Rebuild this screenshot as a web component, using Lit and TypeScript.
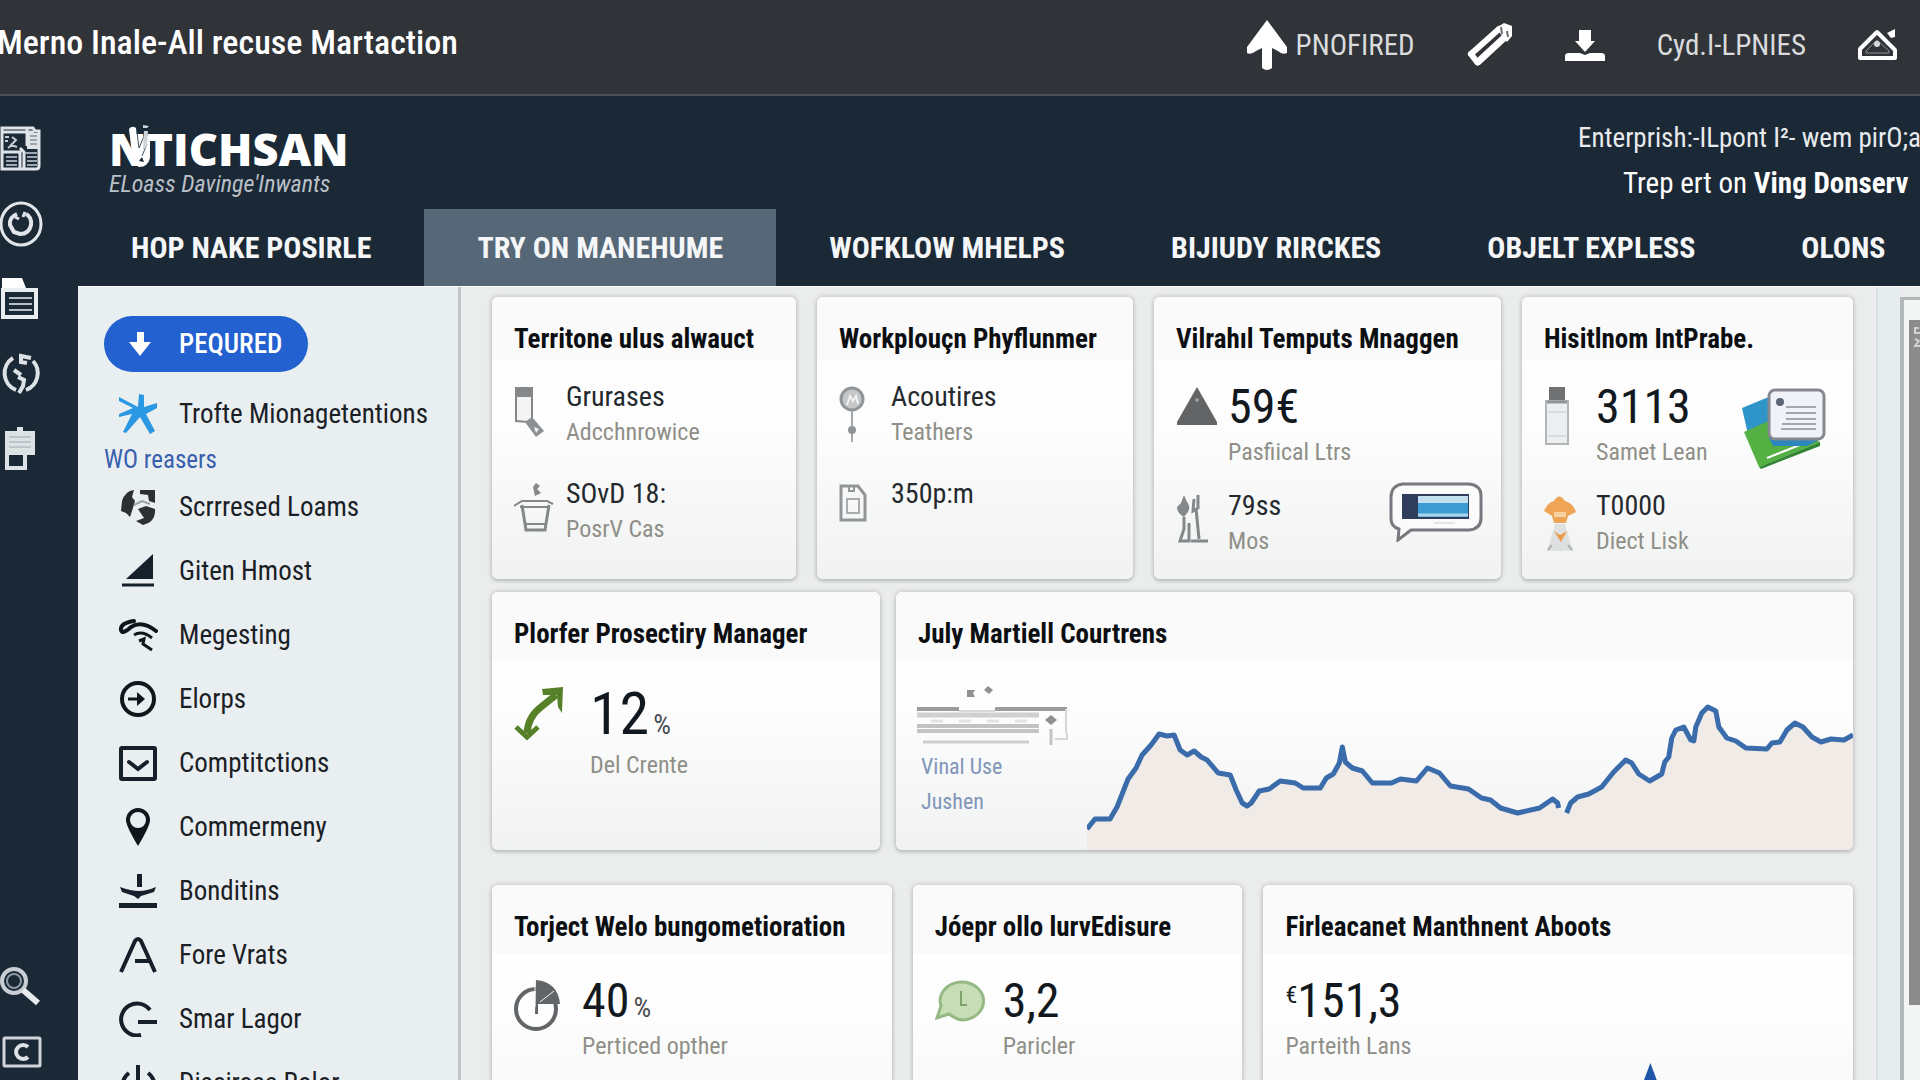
import { LitElement, html, svg, css, nothing, TemplateResult, SVGTemplateResult } from "lit";
import { customElement, property } from "lit/decorators.js";

const icon = (w: number, h: number, body: SVGTemplateResult) =>
  html`<svg class="icon" width=${w} height=${h} viewBox="0 0 ${w} ${h}" fill="none" aria-hidden="true">${body}</svg>`;

/* ---------- top bar icons ---------- */
const upArrow = icon(42, 50, svg`<path d="M21 0 L41 27 V33 Q36 35 32 31 L26 28 V48 Q21 52 16 48 V28 L10 31 Q5 35 1 33 V27 Z" fill="#fff"/>`);
const pencil = icon(46, 44, svg`
  <path d="M11 39 L38 14" stroke="#fff" stroke-width="7" stroke-linecap="round"/>
  <path d="M4 31 L32 6" stroke="#fff" stroke-width="6" stroke-linecap="round"/>
  <path d="M4 31 L10 39" stroke="#fff" stroke-width="6" stroke-linecap="round"/>
  <path d="M29 5 L37 0 L45 3 V13 L40 19 Z" fill="#fff"/>
  <path d="M34 4 L35 11 M40 8 L41 14" stroke="#6a6d71" stroke-width="2"/>`);
const download = icon(40, 31, svg`<path d="M14 0 H26 V11 H30 L20 22 L10 11 H14 Z" fill="#fff"/><path d="M0 31 V26 Q0 23 4 23 H15 L20 25 L25 23 H36 Q40 23 40 26 V31 Z" fill="#fff"/>`);
const tent = icon(40, 32, svg`
  <path d="M19 3 L37 21 V29 H2 V20 Z" stroke="#fff" stroke-width="4" stroke-linejoin="round"/>
  <path d="M8 22 L19 11 L31 22 V24 H8 Z" stroke="#8d9194" stroke-width="1"/>
  <circle cx="19" cy="15" r="3" fill="#d5d8da"/><path d="M29 4 L37 0 V8 L33 9 Z" fill="#fff"/>`);

/* ---------- brand mark ---------- */
const brandMark = html`<svg class="mark" width="26" height="44" viewBox="0 0 26 44" fill="none" aria-hidden="true">
  <path d="M2 5 Q5 1 9 4 L11 24 L15 12 L23 12 L23 34 Q21 43 12 43 Q5 41 5 30 Z" fill="#fff"/>
  <path d="M10 8 L12 24 L17 12 M20 20 L15 32" stroke="#43505d" stroke-width="1"/>
  <path d="M16 1 L22 2 L20 4 L16 4 Z M17 7 L21 7 L20 22 L16 26 Z" fill="#cdd4da"/>
  <path d="M12 37 L15 33 L17 38 Z" fill="#1b2836"/></svg>`;

/* ---------- rail icons ---------- */
const news = icon(41, 45, svg`
  <path d="M2 2 H33 L35 5 H39 V40 Q39 43 36 43 H2 Z" fill="#1c2937" stroke="#dfe4e8" stroke-width="3"/>
  <path d="M3 6 H34 M27 2 V20" stroke="#dfe4e8" stroke-width="3"/>
  <rect x="27" y="7" width="11" height="16" fill="#dfe4e8"/>
  <path d="M30 10 H37 M30 14 H37 M30 18 H37" stroke="#5b6773" stroke-width="1"/>
  <path d="M5 11 H9 M5 15 H8 M12 11 L16 14 L11 19 L17 21 M12 19 L8 22" stroke="#c7cfd6" stroke-width="2"/>
  <path d="M3 26 H20 V42 M24 42 V26 L20 22" stroke="#dfe4e8" stroke-width="3"/>
  <path d="M6 31 H17 M6 35 H17 M6 39 H17 M25 27 H37 M27 31 H37 M27 35 H37 M27 39 H37" stroke="#9da8b2" stroke-width="2"/>`);
const dial = icon(44, 46, svg`
  <ellipse cx="21" cy="23" rx="20" ry="21" stroke="#e2e6ea" stroke-width="3"/>
  <path d="M17 13 Q9 16 10 24 L14 31 L20 33 Q29 33 31 24 Q32 16 26 13" stroke="#e2e6ea" stroke-width="4"/>
  <path d="M15 16 L19 18 M25 11 L23 16" stroke="#e2e6ea" stroke-width="3"/>`);
const sheet = icon(40, 42, svg`
  <path d="M2 0 H22 L26 10 L37 13 H2 Z" fill="#fff"/>
  <path d="M3 12 H36 V39 H3 Z" stroke="#e9edf0" stroke-width="4"/>
  <path d="M9 20 H32 M9 26 H32 M9 32 H32" stroke="#b5bdc5" stroke-width="2"/>`);
const coin = icon(42, 42, svg`
  <path d="M13 5 A18 18 0 0 0 16 37 M33 8 A18 18 0 0 1 26 37" stroke="#dde2e6" stroke-width="4"/>
  <path d="M31 5 L21 3 L21 9 L27 10 M14 17 L21 22 M18 24 L24 27 L23 33 L19 40" stroke="#dde2e6" stroke-width="4"/>`);
const board = icon(38, 44, svg`
  <path d="M5 4 H35 V28 H27 V43 H5 Z" fill="#dde2e5"/><path d="M17 0 H23 V5 H17 Z" fill="#dde2e5"/>
  <path d="M9 10 H31 M9 15 H31 M9 20 H31" stroke="#9da6ae" stroke-width="1"/>
  <rect x="9" y="28" width="14" height="11" fill="#1b2836"/>`);
const lens = icon(42, 40, svg`
  <circle cx="14" cy="14" r="12" stroke="#c8ced4" stroke-width="4"/><circle cx="14" cy="14" r="7" stroke="#8f99a3" stroke-width="2"/>
  <path d="M23 23 L38 36" stroke="#e8ebee" stroke-width="6"/>`);
const frameC = icon(42, 32, svg`
  <rect x="4" y="2" width="36" height="28" rx="1" stroke="#cfd5da" stroke-width="3"/>
  <path d="M28 11 A7 7 0 1 0 28 21" stroke="#dde2e6" stroke-width="4"/>`);

/* ---------- side menu icons ---------- */
const star = icon(40, 40, svg`<path d="M1 3 L20 13 L21 0 L26 1 L26 13 L39 9 V14 L28 20 L37 37 L32 40 L22 23 L8 39 L5 38 L14 20 L1 23 V20 L15 14 L1 7 Z" fill="#2a98e2"/>`);
const globe = icon(36, 36, svg`
  <path d="M2 12 Q5 2 14 1 L12 8 L15 12 L12 22 L10 28 L6 24 L1 22 Z" fill="#2c3033"/>
  <path d="M20 1 H35 V14 L29 12 L28 6 L20 5 Z M18 20 L26 17 L35 20 Q36 33 23 36 L16 32 L24 29 Z" fill="#2c3033"/>
  <path d="M14 16 L22 12 L30 15" stroke="#9aa0a4" stroke-width="2"/>`);
const sail = icon(34, 34, svg`<path d="M32 0 V25 H5 Z" fill="#16202a"/><path d="M1 31 H33" stroke="#16202a" stroke-width="3"/>`);
const waves = icon(40, 34, svg`
  <path d="M16 3 Q2 5 3 12 Q4 17 13 9 Q24 2 38 13" stroke="#10161b" stroke-width="4" stroke-linecap="round"/>
  <path d="M16 17 Q24 12 34 20 M21 23 L26 21 L25 26 L34 32" stroke="#10161b" stroke-width="3"/>`);
const circleArrow = icon(38, 36, svg`<circle cx="19" cy="18" r="16" stroke="#10161b" stroke-width="4"/><path d="M9 18 H22" stroke="#10161b" stroke-width="3"/><path d="M18 11 L26 18 L18 25 Z" fill="#10161b"/>`);
const boxCheck = icon(38, 36, svg`<rect x="2" y="3" width="34" height="31" rx="1" stroke="#16202a" stroke-width="4"/><path d="M10 17 L19 24 L28 17" stroke="#16202a" stroke-width="4" stroke-linecap="round"/>`);
const pin = icon(26, 38, svg`<path fill-rule="evenodd" d="M13 0 A12 12 0 0 1 25 12 Q25 18 13 38 Q1 18 1 12 A12 12 0 0 1 13 0 Z M13 4 A8 8 0 1 0 13 20 A8 8 0 1 0 13 4 Z" fill="#10161b"/>`);
const drop = icon(38, 36, svg`<path d="M18 1 H23 V14 H18 Z M1 14 Q12 18 20 18 Q28 18 37 14 L35 19 L22 23 L19 26 L15 23 L3 19 Z M0 30 H38 V35 H0 Z" fill="#16202a"/>`);
const peak = icon(38, 36, svg`<path d="M2 35 L16 4 Q19 0 22 4 L36 35 M16 24 H30" stroke="#16202a" stroke-width="4"/>`);
const loop = icon(40, 36, svg`<path d="M32 9 A16 16 0 1 0 23 34" stroke="#16202a" stroke-width="4"/><path d="M20 21 H39" stroke="#16202a" stroke-width="4"/>`);
const power = icon(38, 38, svg`<path d="M10 9 A16 16 0 1 0 29 9 M19 1 V20" stroke="#16202a" stroke-width="4"/>`);
const pillArrow = icon(22, 24, svg`<path d="M8 0 H15 V10 H22 L11 24 L0 10 H8 Z" fill="#fff"/>`);

/* ---------- card icons ---------- */
const phone = icon(30, 52, svg`
  <path d="M2 2 H18 V34 L14 36 L2 35 Z" fill="#f4f4f4" stroke="#85888b" stroke-width="2"/><rect x="1" y="1" width="18" height="10" fill="#85888b"/>
  <path d="M11 36 L18 31 L30 45 L22 51 Z" fill="#8d9093"/><path d="M20 41 L25 43 L22 47 Z" fill="#f2f2f2"/>`);
const cup = icon(40, 50, svg`
  <path d="M8 22 L12 47 H31 L35 22" stroke="#85888b" stroke-width="3"/><path d="M0 23 L8 18 H33 L39 21" stroke="#85888b" stroke-width="2"/>
  <path d="M6 24 H36 M12 41 H31" stroke="#85888b" stroke-width="2"/><path d="M22 0 L26 3 L23 6 L27 10 L21 13 L19 4 Z" fill="#85888b"/>`);
const lollipop = icon(26, 58, svg`
  <circle cx="13" cy="13" r="11" fill="#c4c6c7" stroke="#929597" stroke-width="3"/><path d="M8 19 L11 10 L14 15 L17 10 L19 18" stroke="#f2f2f2" stroke-width="2"/>
  <path d="M13 25 V56" stroke="#a5a8aa" stroke-width="2"/><circle cx="13" cy="44" r="4" fill="#929597"/>`);
const tag = icon(28, 40, svg`
  <path d="M2 3 H19 L26 12 V37 H2 Z" stroke="#929597" stroke-width="3"/><rect x="8" y="16" width="12" height="14" stroke="#a9acae" stroke-width="2"/><path d="M10 2 V8 H15 V2" stroke="#929597" stroke-width="2"/>`);
const cone = icon(42, 40, svg`<path d="M21 1 L41 36 V39 H1 V36 Z" fill="#636466"/><circle cx="21" cy="14" r="2" fill="#9a9b9d"/>`);
const tools = icon(32, 48, svg`
  <path d="M8 0 L11 7 Q15 11 12 17 L8 22 Q1 18 1 12 L5 8 Z" fill="#85888b"/><path d="M8 22 V34 L4 46 H13 V28 M18 4 L17 16 L22 13 V0 M20 13 L23 44 M15 46 H32" stroke="#85888b" stroke-width="3"/>`);
const usb = icon(26, 60, svg`
  <rect x="5" y="1" width="16" height="13" fill="#6f7173"/><rect x="2" y="15" width="22" height="43" fill="#eceeef" stroke="#b3b6b9" stroke-width="2"/>
  <path d="M3 16 H23" stroke="#919497" stroke-width="3"/><path d="M4 26 H22 M4 50 H22" stroke="#c5c8ca" stroke-width="1"/>`);
const worker = icon(32, 58, svg`
  <path d="M0 16 Q4 7 10 6 Q15 -3 21 6 Q29 8 32 17 L24 21 L22 28 H10 L8 21 Z" fill="#f0a556"/><path d="M10 17 H22 V22 H10 Z" fill="#f8d1a2"/>
  <path d="M11 29 H21 L29 56 H3 Z" fill="#dfe0e1"/><path d="M10 36 L16 40 L23 36 L17 47 Z" fill="#ec9c4c"/><path d="M4 55 L8 50 M28 55 L24 50" stroke="#a9acae" stroke-width="2"/>`);
const bubbleScreen = icon(94, 60, svg`
  <path d="M14 2 H80 Q92 3 92 14 V36 Q92 47 80 48 H22 L9 58 L10 47 Q2 45 2 36 V14 Q3 3 14 2 Z" fill="#fbfbfb" stroke="#77797e" stroke-width="3"/>
  <rect x="13" y="12" width="67" height="25" fill="#2f3c5c"/><rect x="29" y="14" width="50" height="21" fill="#3c9bd3"/><rect x="29" y="14" width="50" height="7" fill="#c3dff0"/><path d="M29 33 H79" stroke="#a9d4ec" stroke-width="3"/>
  <path d="M45 41 H66" stroke="#cccdd0" stroke-width="1"/>`);
const folders = icon(86, 82, svg`
  <path d="M1 20 L30 8 L44 48 L20 60 L6 42 Z" fill="#2f95c8"/><path d="M3 44 L34 30 L79 54 L18 79 Z" fill="#55b043"/>
  <path d="M18 79 L79 54 V58 L20 81 Z" fill="#2f8531"/><path d="M26 70 L74 51" stroke="#fff" stroke-width="2"/><path d="M28 50 L82 50 L66 58 L32 58 Z" fill="#2b87bd"/>
  <rect x="28" y="2" width="55" height="49" rx="6" fill="#f0f2f7" stroke="#85888f" stroke-width="3"/>
  <circle cx="39" cy="14" r="4" fill="#5b6577"/><path d="M45 19 H75 M45 25 H75 M45 31 H75 M41 36 H75 M40 41 H75" stroke="#a2a6af" stroke-width="2"/>`);
const greenArrows = icon(50, 54, svg`
  <path d="M13 46 Q14 30 27 20 L42 8" stroke="#568129" stroke-width="7"/><path d="M28 2 L49 0 L48 26 L44 20 L43 8 L29 8 Z" fill="#568129"/><path d="M2 40 L13 50 L24 40" stroke="#568129" stroke-width="5"/>`);
const pie = icon(46, 52, svg`
  <circle cx="22" cy="29" r="20" stroke="#626568" stroke-width="4"/><path d="M22 0 Q44 2 46 24 H24 V34 H21 Z" fill="#626568"/><path d="M21 1 V27 M26 22 L40 11" stroke="#f3f3f3" stroke-width="1"/>`);
const clockBubble = icon(50, 42, svg`
  <path d="M25 2 A22 19 0 1 1 28 40 Q22 40 14 34 L2 38 L6 26 A22 19 0 0 1 25 2 Z" fill="#c6ddb5" stroke="#95b884" stroke-width="3"/><path d="M26 11 V25 H32" stroke="#7fa46c" stroke-width="2"/>`);
const ledger = icon(154, 64, svg`
  <path d="M0 24 H42 M78 24 H150" stroke="#9b9c9e" stroke-width="4"/><path d="M42 26 H78" stroke="#d8d9da" stroke-width="2"/>
  <path d="M0 30 H122" stroke="#cfd0d2" stroke-width="5"/><path d="M0 41 H122 M0 46 H122" stroke="#c2c3c5" stroke-width="4"/><path d="M14 36 H110" stroke="#e2e3e4" stroke-width="3" stroke-dasharray="12 16"/>
  <path d="M6 57 H112" stroke="#cdced0" stroke-width="3"/><path d="M149 24 V48 M150 48 V54 H138" stroke="#d5d6d8" stroke-width="2"/><path d="M134 44 V60" stroke="#c3c4c6" stroke-width="3"/>
  <path d="M128 35 L134 30 L140 35 L134 40 Z M50 5 H58 L56 8 L58 12 H50 Z M67 5 L71 1 L76 5 L72 9 Z" fill="#8f9092"/>`);

type Metric = { icon?: TemplateResult; value: string; unit?: string; prefix?: string; label?: string; size: "s" | "m" | "l" };

@customElement("metric-item")
class MetricItem extends LitElement {
  @property({ attribute: false }) data!: Metric;
  static styles = css`
    :host { display: flex; }
    .mark { flex: 0 0 var(--mark, 52px); display: flex; justify-content: flex-start; padding-top: 7px; }
    .icon { display: block; flex: none; }
    .text { min-width: 0; white-space: nowrap; }
    .value { color: #24292d; }
    .s { font-size: 28px; line-height: 36px; }
    .m { font-size: 48px; line-height: 56px; color: #111820; }
    .l { font-size: 60px; line-height: 68px; color: #111820; }
    .unit { font-size: 28px; line-height: 0; color: #4a4d50; margin-left: 4px; }
    .prefix { font-size: 24px; line-height: 0; vertical-align: 14px; }
    .label { font-size: 24px; line-height: 34px; color: #8f8f88; }
  `;
  render() {
    const d = this.data;
    return html`
      ${d.icon ? html`<div class="mark">${d.icon}</div>` : nothing}
      <div class="text">
        <div class="value ${d.size}">${d.prefix ? html`<span class="prefix">${d.prefix}</span>` : nothing}${d.value}${d.unit ? html`<span class="unit">${d.unit}</span>` : nothing}</div>
        ${d.label ? html`<div class="label">${d.label}</div>` : nothing}
      </div>`;
  }
}

@customElement("dash-card")
class DashCard extends LitElement {
  @property() heading = "";
  static styles = css`
    :host {
      display: flex; flex-direction: column; min-width: 0; overflow: hidden; border-radius: 6px;
      background: linear-gradient(#ffffff, #fdfdfd 45%, #f1f2f2);
      box-shadow: 0 0 4px 1px #c4c6c7, 0 2px 3px #bcbebf;
    }
    h2 {
      margin: 0; padding: 28px 22px var(--head-end, 13px); background: #fafafa; color: #0c0f12;
      font-size: 27px; line-height: 28px; font-weight: 700; white-space: nowrap;
    }
    .body { flex: 1; display: flex; flex-direction: column; min-height: 0; }
  `;
  render() {
    return html`<h2>${this.heading}</h2><div class="body"><slot></slot></div>`;
  }
}

const LINE_A: number[][] = [
  [0, 129], [8, 119], [23, 119], [30, 107], [41, 79], [49, 68], [55, 55], [64, 45], [72, 34], [80, 36], [87, 35], [93, 50],
  [100, 55], [107, 51], [114, 57], [120, 60], [131, 73], [143, 75], [149, 90], [155, 103], [160, 106], [164, 103], [172, 91],
  [182, 89], [193, 81], [208, 83], [216, 88], [233, 88], [239, 78], [246, 74], [252, 63], [255, 47], [258, 62], [265, 68],
  [275, 71], [285, 83], [304, 83], [313, 79], [329, 81], [340, 68], [352, 73], [363, 86], [381, 89], [394, 98], [403, 100],
  [413, 108], [430, 113], [452, 108], [465, 99], [470, 103], [471, 108]];
const LINE_B: number[][] = [
  [479, 113], [483, 103], [490, 97], [501, 94], [514, 87], [526, 72], [538, 60], [544, 63], [551, 74], [562, 81], [574, 74],
  [577, 62], [581, 57], [584, 38], [588, 30], [596, 27], [603, 40], [606, 41], [608, 27], [614, 13], [620, 7], [628, 11],
  [631, 27], [639, 38], [648, 41], [658, 48], [679, 49], [684, 43], [692, 42], [699, 30], [707, 23], [715, 27], [724, 37],
  [733, 42], [743, 39], [756, 40], [765, 35]];
const points = (list: number[][]) => list.map((p) => p.join(",")).join(" ");

const MENU: [TemplateResult, string][] = [
  [globe, "Scrrresed Loams"], [sail, "Giten Hmost"], [waves, "Megesting"], [circleArrow, "Elorps"], [boxCheck, "Comptitctions"],
  [pin, "Commermeny"], [drop, "Bonditins"], [peak, "Fore Vrats"], [loop, "Smar Lagor"], [power, "Discircee Rolor"]];

const TABS = ["HOP NAKE POSIRLE", "TRY ON MANEHUME", "WOFKLOW MHELPS", "BIJIUDY RIRCKES", "OBJELT EXPLESS", "OLONS"];

@customElement("app-root")
class AppRoot extends LitElement {
  static styles = css`
    :host {
      display: flex; flex-direction: column; height: 100vh; overflow: hidden; background: #1b2836;
      font-family: "Liberation Sans Narrow", "Roboto Condensed", Roboto, "Liberation Sans", sans-serif; color: #1a2025;
    }
    * { box-sizing: border-box; }
    a { color: inherit; text-decoration: none; }
    button { font: inherit; color: inherit; background: none; border: 0; padding: 0; display: flex; align-items: center; }
    .icon { display: block; flex: none; }

    .topbar {
      flex: none; height: 96px; padding-right: 22px; display: flex; align-items: center; justify-content: space-between;
      background: #303338; border-bottom: 2px solid #4c5157; color: #fff; white-space: nowrap;
    }
    .topbar h1 { margin: 0 0 0 -3px; padding-bottom: 11px; font-size: 34px; line-height: 40px; font-weight: 500; }
    .tools { display: flex; align-items: center; padding-bottom: 4px; font-size: 29px; color: #d9dbdd; }
    .tools button { gap: 8px; margin-left: 52px; }

    .frame { flex: 1; min-height: 0; display: grid; grid-template-columns: 78px minmax(0, 1fr); }
    .rail { display: flex; flex-direction: column; justify-content: space-between; padding: 15px 0 8px; }
    .rail button { height: 75px; width: 44px; }
    .rail .tail { display: flex; flex-direction: column; gap: 25px; }
    .rail .tail button { height: 40px; }

    .main { min-width: 0; min-height: 0; display: flex; flex-direction: column; }
    .brandrow { flex: none; height: 113px; display: flex; justify-content: space-between; color: #fff; white-space: nowrap; }
    .brand { padding: 30px 0 0 31px; }
    .name { position: relative; display: flex; align-items: center; font: 800 45px/46px "Open Sans", "Noto Sans", sans-serif; height: 46px; }
    .mark { position: absolute; left: 18px; top: -2px; }
    .tagline { font-size: 24px; line-height: 24px; font-style: italic; color: #b9c0c7; }
    .account { flex: 0 1 342px; overflow: hidden; padding-top: 20px; font-size: 27px; line-height: 45px; color: #e8ebed; }
    .account p { margin: 0; }
    .account .who { padding-left: 45px; color: #fff; font-size: 29px; }

    .tabs { flex: none; height: 77px; display: flex; overflow: hidden; color: #f4f6f7; font-size: 30px; font-weight: 700; white-space: nowrap; }
    .tabs a { flex: none; padding: 0 53px; display: flex; align-items: center; }
    .tabs .on { background: #566778; }

    .work { flex: 1; min-height: 0; display: grid; grid-template-columns: 383px minmax(0, 1fr) 24px 20px; background: #ebecec; border-top: 1px solid #fff; }
    .side { background: #e9eff1; border-right: 3px solid #bfc4c7; padding: 29px 0 0 26px; overflow: hidden; white-space: nowrap; font-size: 27px; }
    .pill { height: 56px; width: 204px; border-radius: 28px; background: #2360d0; color: #fff; padding-left: 25px; gap: 28px; font-weight: 500; }
    .side a { display: flex; align-items: center; height: 64px; }
    .side .lead { height: 83px; }
    .slot { flex: 0 0 60px; margin-right: 15px; display: flex; justify-content: center; padding-left: 8px; }
    .side .sub { display: block; height: 20px; line-height: 10px; font-size: 25px; color: #3a5fae; }

    .board { min-width: 0; overflow: hidden; padding: 10px 23px 0 31px; }
    .row { display: grid; }
    .r1 { grid-template-columns: 304fr 316fr 347fr 331fr; gap: 21px; height: 282px; --head-end: 7px; }
    .r2 { grid-template-columns: 388fr 957fr; gap: 16px; height: 258px; margin-top: 13px; --mark: 76px; }
    .r3 { grid-template-columns: 400fr 330fr 590fr; gap: 21px; height: 300px; margin-top: 35px; --mark: 68px; }
    .metrics { display: flex; flex-direction: column; gap: 27px; padding: 19px 0 0 22px; }
    .metrics.big { gap: 19px; }
    .withart { display: grid; grid-template-columns: minmax(0, 1fr) auto; padding-right: 18px; }
    .top { padding-top: 28px; padding-right: 8px; }
    .low { padding-top: 122px; }

    .trend { flex: 1; display: grid; grid-template-columns: 191px minmax(0, 1fr); }
    .legend { padding: 24px 0 0 21px; font-size: 22px; line-height: 35px; color: #8095b8; }
    .legend a { display: block; padding-left: 4px; }
    .plot { display: block; align-self: end; width: 100%; height: 150px; }
    .spike { display: block; width: 100%; height: 120px; }

    .gutter { background: #e6edef; border-left: 2px solid #dadfe1; }
    .track { margin-top: 10px; border: solid #b4b7b9; border-width: 3px 0 0 4px; background: #f4f5f5; padding: 20px 0 0 5px; }
    .thumb { height: 685px; background: #8c8c8c; padding-top: 6px; }
  `;

  render() {
    const m = (data: Metric) => html`<metric-item .data=${data}></metric-item>`;
    return html`
      <header class="topbar">
        <h1>Merno Inale-All recuse Martaction</h1>
        <div class="tools">
          <button>${upArrow}PNOFIRED</button>
          <button aria-label="Edit">${pencil}</button>
          <button aria-label="Download">${download}</button>
          <button>Cyd.I-LPNIES</button>
          <button aria-label="Home">${tent}</button>
        </div>
      </header>
      <div class="frame">
        <nav class="rail" aria-label="Tools">
          <div>
            <button aria-label="News">${news}</button>
            <button aria-label="Dial">${dial}</button>
            <button aria-label="Document">${sheet}</button>
            <button aria-label="Billing">${coin}</button>
            <button aria-label="Clipboard">${board}</button>
          </div>
          <div class="tail">
            <button aria-label="Search">${lens}</button>
            <button aria-label="Console">${frameC}</button>
          </div>
        </nav>
        <div class="main">
          <div class="brandrow">
            <div class="brand">
              <div class="name">NTICHSAN${brandMark}</div>
              <div class="tagline">ELoass Davinge'Inwants</div>
            </div>
            <div class="account">
              <p>Enterprish:-ILpont I²- wem pirO;an</p>
              <p class="who">Trep ert on <b>Ving Donserv</b></p>
            </div>
          </div>
          <nav class="tabs" aria-label="Sections">
            ${TABS.map((t, i) => html`<a href="#" class=${i === 1 ? "on" : ""}>${t}</a>`)}
          </nav>
          <div class="work">
            <aside class="side">
              <button class="pill">${pillArrow}PEQURED</button>
              <a class="lead" href="#"><span class="slot">${star}</span>Trofte Mionagetentions</a>
              <a class="sub" href="#">WO reasers</a>
              ${MENU.map(([i, t]) => html`<a href="#"><span class="slot">${i}</span>${t}</a>`)}
            </aside>
            <main class="board">
              <div class="row r1">
                <dash-card heading="Territone ulus alwauct">
                  <div class="metrics">
                    ${m({ icon: phone, value: "Grurases", label: "Adcchnrowice", size: "s" })}
                    ${m({ icon: cup, value: "SOvD 18:", label: "PosrV Cas", size: "s" })}
                  </div>
                </dash-card>
                <dash-card heading="Workplouçn Phyflunmer">
                  <div class="metrics">
                    ${m({ icon: lollipop, value: "Acoutires", label: "Teathers", size: "s" })}
                    ${m({ icon: tag, value: "350p:m", size: "s" })}
                  </div>
                </dash-card>
                <dash-card heading="Vilrahıl Temputs Mnaggen">
                  <div class="withart">
                    <div class="metrics big">
                      ${m({ icon: cone, value: "59€", label: "Pasfiical Ltrs", size: "m" })}
                      ${m({ icon: tools, value: "79ss", label: "Mos", size: "s" })}
                    </div>
                    <div class="low">${bubbleScreen}</div>
                  </div>
                </dash-card>
                <dash-card heading="Hisitlnom IntPrabe.">
                  <div class="withart">
                    <div class="metrics big">
                      ${m({ icon: usb, value: "3113", label: "Samet Lean", size: "m" })}
                      ${m({ icon: worker, value: "T0000", label: "Diect Lisk", size: "s" })}
                    </div>
                    <div class="top">${folders}</div>
                  </div>
                </dash-card>
              </div>
              <div class="row r2">
                <dash-card heading="Plorfer Prosectiry Manager">
                  <div class="metrics">${m({ icon: greenArrows, value: "12", unit: "%", label: "Del Crente", size: "l" })}</div>
                </dash-card>
                <dash-card heading="July Martiell Courtrens">
                  <div class="trend">
                    <div class="legend">${ledger}<a href="#">Vinal Use</a><a href="#">Jushen</a></div>
                    <svg class="plot" viewBox="0 0 765 150" preserveAspectRatio="none" role="img" aria-label="Trend">
                      <polygon points="0,150 ${points(LINE_A)} ${points(LINE_B)} 765,150" fill="#f0ebe7"></polygon>
                      <g fill="none" stroke="#3a6bab" stroke-width="5" stroke-linejoin="round">
                        <polyline points=${points(LINE_A)}></polyline>
                        <polyline points=${points(LINE_B)}></polyline>
                      </g>
                    </svg>
                  </div>
                </dash-card>
              </div>
              <div class="row r3">
                <dash-card heading="Torject Welo bungometioration">
                  <div class="metrics">${m({ icon: pie, value: "40", unit: "%", label: "Perticed opther", size: "m" })}</div>
                </dash-card>
                <dash-card heading="Jóepr ollo lurvEdisure">
                  <div class="metrics">${m({ icon: clockBubble, value: "3,2", label: "Paricler", size: "m" })}</div>
                </dash-card>
                <dash-card heading="Firleacanet Manthnent Aboots">
                  <div class="metrics">${m({ prefix: "€", value: "151,3", label: "Parteith Lans", size: "m" })}</div>
                  <svg class="spike" viewBox="0 0 589 120" preserveAspectRatio="none" aria-hidden="true">
                    <polygon points="387,0 396,24 420,120 350,120 378,24" fill="#1f55a8"></polygon>
                  </svg>
                </dash-card>
              </div>
            </main>
            <div class="gutter"></div>
            <div class="track"><div class="thumb">
              <svg class="icon" width="11" height="26" viewBox="0 0 11 26" fill="none" aria-hidden="true"><path d="M10 2 H6 V7 H11 M6 13 L10 15 L6 20 H11" stroke="#d2d2d2" stroke-width="2"/></svg>
            </div></div>
          </div>
        </div>
      </div>`;
  }
}
